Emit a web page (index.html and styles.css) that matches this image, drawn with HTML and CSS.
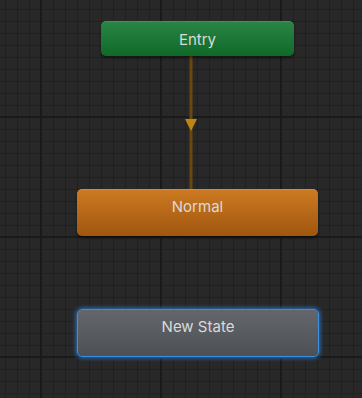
FILE: index.html
```html
<!DOCTYPE html>
<html lang="en">
<head>
  <meta charset="UTF-8" />
  <meta name="viewport" content="width=device-width, initial-scale=1.0"/>
  <title>Animator</title>
  <link rel="stylesheet" href="styles.css">
</head>
<body>
  <div class="graph">
    <!-- transition Entry -> Normal -->
    <svg class="transition" width="14" height="134" viewBox="0 0 14 134">
      <rect x="5.5" y="0" width="3" height="134" fill="#6a4710"/>
      <polygon points="1,63 13,63 7,75" fill="#c08412"/>
    </svg>

    <div class="node entry">Entry</div>
    <div class="node normal">Normal</div>
    <div class="node state selected">New State</div>
  </div>
</body>
</html>
```

FILE: styles.css
```css
html, body {
  margin: 0;
  padding: 0;
}
body {
  font-family: Inter, "Noto Sans", Arial, sans-serif;
  background-color: #282828;
}
.graph {
  position: relative;
  width: 362px;
  height: 398px;
  overflow: hidden;
  background-color: #282828;
  background-image:
    linear-gradient(to right, #1a1a1a 0, #1a1a1a 2px, transparent 2px),
    linear-gradient(to bottom, #1a1a1a 0, #1a1a1a 2px, transparent 2px),
    linear-gradient(to right, #202020 0, #202020 1px, transparent 1px),
    linear-gradient(to bottom, #202020 0, #202020 1px, transparent 1px);
  background-size: 120px 120px, 120px 120px, 12px 12px, 12px 12px;
  background-position: 40px 0, 0 116px, 5px 0, 0 9px;
}
.transition {
  position: absolute;
  left: 184px;
  top: 56px;
}
.node {
  position: absolute;
  display: flex;
  align-items: center;
  justify-content: center;
  box-sizing: border-box;
  border-radius: 5px;
  color: #dadada;
  font-size: 15px;
  box-shadow: 0 2px 3px rgba(0, 0, 0, 0.45);
}
.entry {
  left: 101px;
  top: 21px;
  width: 193px;
  height: 35px;
  background: linear-gradient(to bottom, #2a8444, #0f6a29);
  border-top: 1px solid #3a9453;
}
.normal {
  left: 77px;
  top: 189px;
  width: 241px;
  height: 47px;
  padding-bottom: 14px;
  background: linear-gradient(to bottom, #cc7a22, #a0560f);
  border-top: 1px solid #d68a3a;
}
.state {
  left: 77px;
  top: 309px;
  width: 242px;
  height: 48px;
  padding-bottom: 14px;
  background: linear-gradient(to bottom, #63666c, #4d5055);
}
.selected {
  border: 1px solid #3c8fe2;
  box-shadow: 0 0 4px 1px #2874c4;
}
```
